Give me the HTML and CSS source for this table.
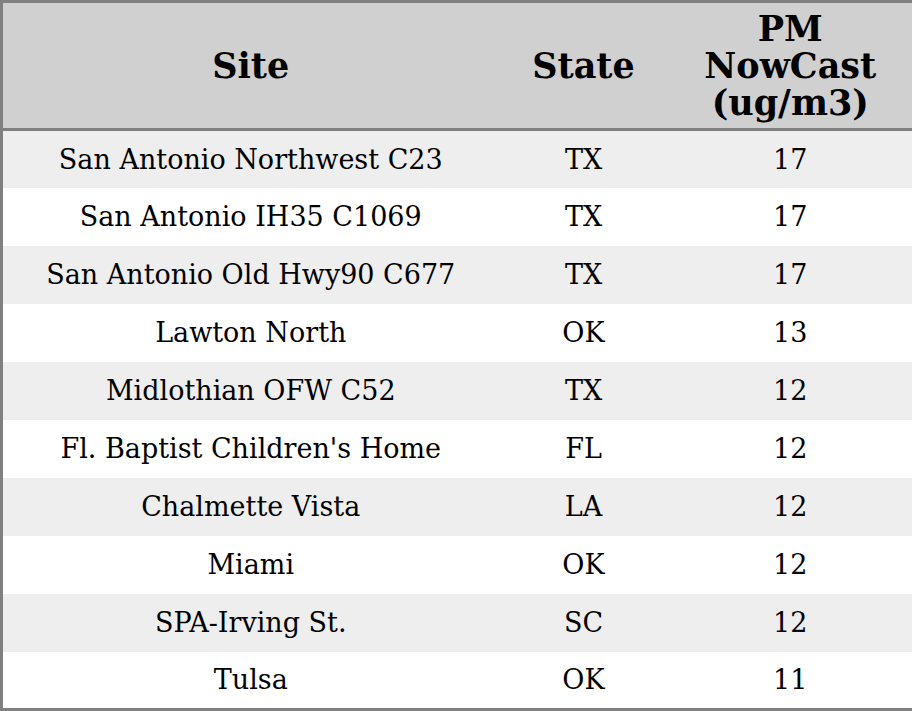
FILE: index.html
```html
<!DOCTYPE html>
<html>
<head>
<meta charset="utf-8">
<link rel="stylesheet" href="styles.css">
</head>
<body>
<table class="aq">
  <colgroup>
    <col class="c-site">
    <col class="c-state">
    <col class="c-pm">
  </colgroup>
  <thead>
    <tr class="head">
      <th>Site</th>
      <th>State</th>
      <th>PM<br>NowCast<br>(ug/m3)</th>
    </tr>
  </thead>
  <tbody>
    <tr><td>San Antonio Northwest C23</td><td>TX</td><td>17</td></tr>
    <tr><td>San Antonio IH35 C1069</td><td>TX</td><td>17</td></tr>
    <tr><td>San Antonio Old Hwy90 C677</td><td>TX</td><td>17</td></tr>
    <tr><td>Lawton North</td><td>OK</td><td>13</td></tr>
    <tr><td>Midlothian OFW C52</td><td>TX</td><td>12</td></tr>
    <tr><td>Fl. Baptist Children's Home</td><td>FL</td><td>12</td></tr>
    <tr><td>Chalmette Vista</td><td>LA</td><td>12</td></tr>
    <tr><td>Miami</td><td>OK</td><td>12</td></tr>
    <tr><td>SPA-Irving St.</td><td>SC</td><td>12</td></tr>
    <tr><td>Tulsa</td><td>OK</td><td>11</td></tr>
  </tbody>
</table>
</body>
</html>
```
FILE: styles.css
```css
html, body {
  margin: 0;
  padding: 0;
  background: #ffffff;
}
.aq {
  width: 912px;
  height: 711px;
  border-collapse: collapse;
  table-layout: fixed;
  border: 3px solid #808080;
  font-family: "DejaVu Serif", serif;
  color: #000;
}
.c-site { width: 497px; }
.c-state { width: 170px; }
.c-pm { width: 245px; }
.head {
  background: #d0d0d0;
  height: 128px;
}
.head th {
  font-size: 35px;
  font-weight: bold;
  line-height: 37px;
  border-bottom: 3px solid #808080;
  padding: 0;
  text-align: center;
  vertical-align: middle;
}
tbody tr {
  height: 57.7px;
}
tbody tr:nth-child(odd) {
  background: #eeeeee;
}
tbody td {
  font-size: 27px;
  text-align: center;
  vertical-align: middle;
  padding: 0;
}
```
